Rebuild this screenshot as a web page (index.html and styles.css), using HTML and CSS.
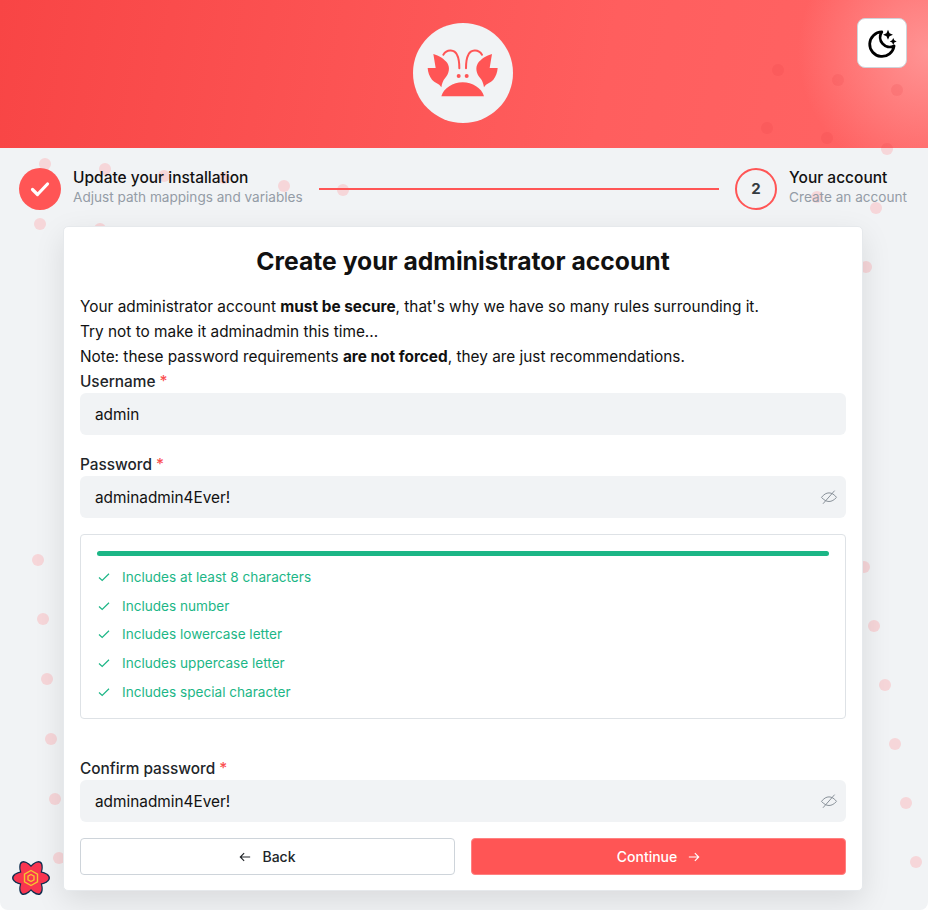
FILE: index.html
```html
<!DOCTYPE html>
<html lang="en">
  <head>
    <meta charset="UTF-8" />
    <meta name="viewport" content="width=device-width, initial-scale=1.0" />
    <title>Create your administrator account</title>
    <link rel="stylesheet" href="styles.css">
  </head>
  <body>
    <!-- Floating dots behind the page -->
    <svg class="dots" viewBox="0 0 928 910">
      <circle cx="45" cy="164" r="6" /><circle cx="105" cy="169" r="6" /><circle cx="164" cy="176" r="6" />
      <circle cx="224" cy="178" r="6" /><circle cx="284" cy="186" r="6" /><circle cx="343" cy="190" r="6" />
      <circle cx="40" cy="224" r="6" /><circle cx="100" cy="229" r="6" />
      <circle cx="38" cy="560" r="6" /><circle cx="43" cy="619" r="6" /><circle cx="47" cy="679" r="6" />
      <circle cx="51" cy="739" r="6" /><circle cx="55" cy="799" r="6" /><circle cx="59" cy="858" r="6" />
      <circle cx="887" cy="149" r="6" /><circle cx="817" cy="197" r="6" /><circle cx="876" cy="208" r="6" />
      <circle cx="866" cy="267" r="6" /><circle cx="864" cy="567" r="6" /><circle cx="874" cy="626" r="6" />
      <circle cx="885" cy="685" r="6" /><circle cx="895" cy="744" r="6" /><circle cx="906" cy="803" r="6" />
      <circle cx="916" cy="862" r="6" />
    </svg>

    <header class="top">
      <svg class="top-dots" viewBox="0 0 928 148">
        <circle cx="838" cy="80" r="6" /><circle cx="897" cy="90" r="6" /><circle cx="827" cy="138" r="6" />
        <circle cx="767" cy="128" r="6" /><circle cx="778" cy="70" r="6" /><circle cx="887" cy="149" r="6" />
      </svg>
      <div class="logo">
        <svg viewBox="100 70 300 300" width="100" height="100">
          <path class="crab" d="M161 163C178 168 194 178 203 190C212 205 208 222 196 236C190 243 187 252 185 263C178 250 165 250 157 240C149 230 145 218 144 205L168 205Z" />
          <path class="crab" d="M337 163C320 168 304 178 295 190C286 205 290 222 302 236C308 243 311 252 313 263C320 250 333 250 341 240C349 230 353 218 354 205L330 205Z" />
          <path class="crab-line" d="M239 206C239 190 238 176 232 165C225 151 203 146 191 165" />
          <path class="crab-line" d="M259 206C259 190 260 176 266 165C273 151 295 146 307 165" />
          <circle class="crab" cx="237" cy="229" r="6" />
          <circle class="crab" cx="261" cy="229" r="6" />
          <path class="crab" d="M185 290C192 265 220 248 249 248C278 248 306 265 313 290Z" />
        </svg>
      </div>
      <button class="theme-btn" aria-label="Toggle theme">
        <svg viewBox="0 0 24 24" width="33" height="33">
          <path class="moon" d="M11.5 3.6a7 7 0 0 0 8.9 10.2A8.9 8.9 0 1 1 11.5 3.6Z" />
          <path class="spark" d="M16 2l1.100 2.500 2.500 1.100-2.500 1.100-1.100 2.500-1.100-2.500-2.500-1.100 2.500-1.100Z" />
          <path class="spark" d="M19.800 8l.8 1.700 1.700.8-1.700.8-.8 1.700-.8-1.700-1.700-.8 1.700-.8Z" />
        </svg>
      </button>
    </header>

    <div class="stepper">
      <div class="step">
        <span class="step-icon done">
          <svg viewBox="0 0 24 24" width="24" height="24"><path d="M4.5 12.5l5 5 10-10.5" /></svg>
        </span>
        <div class="step-text">
          <div class="step-title">Update your installation</div>
          <div class="step-desc">Adjust path mappings and variables</div>
        </div>
      </div>
      <div class="step-line"></div>
      <div class="step">
        <span class="step-icon current">2</span>
        <div class="step-text">
          <div class="step-title">Your account</div>
          <div class="step-desc">Create an account</div>
        </div>
      </div>
    </div>

    <main class="card">
      <h1>Create your administrator account</h1>
      <p>Your administrator account <b>must be secure</b>, that's why we have so many rules surrounding it.</p>
      <p>Try not to make it adminadmin this time...</p>
      <p>Note: these password requirements <b>are not forced</b>, they are just recommendations.</p>

      <label class="field-label">Username <span class="req">*</span></label>
      <div class="input">admin</div>

      <label class="field-label second">Password <span class="req">*</span></label>
      <div class="input">
        adminadmin4Ever!
        <svg class="eye" viewBox="0 0 24 24" width="18" height="18">
          <path d="M2 12.5C5 8.5 8.5 6.5 12 6.5s7 2 10 6c-3 3.5-6.500 5.500-10 5.500S5 16 2 12.500Z" />
          <path d="M19.500 3.500L4 21" />
        </svg>
      </div>

      <div class="strength">
        <div class="bar"></div>
        <ul class="rules">
          <li><svg viewBox="0 0 14 14" width="14" height="14"><path d="M2 7.500l3.200 3L12 3.800" /></svg>Includes at least 8 characters</li>
          <li><svg viewBox="0 0 14 14" width="14" height="14"><path d="M2 7.500l3.200 3L12 3.800" /></svg>Includes number</li>
          <li><svg viewBox="0 0 14 14" width="14" height="14"><path d="M2 7.500l3.200 3L12 3.800" /></svg>Includes lowercase letter</li>
          <li><svg viewBox="0 0 14 14" width="14" height="14"><path d="M2 7.500l3.200 3L12 3.800" /></svg>Includes uppercase letter</li>
          <li><svg viewBox="0 0 14 14" width="14" height="14"><path d="M2 7.500l3.200 3L12 3.800" /></svg>Includes special character</li>
        </ul>
      </div>

      <label class="field-label third">Confirm password <span class="req">*</span></label>
      <div class="input">
        adminadmin4Ever!
        <svg class="eye" viewBox="0 0 24 24" width="18" height="18">
          <path d="M2 12.5C5 8.5 8.5 6.5 12 6.5s7 2 10 6c-3 3.5-6.500 5.500-10 5.500S5 16 2 12.500Z" />
          <path d="M19.500 3.500L4 21" />
        </svg>
      </div>

      <div class="actions">
        <button class="btn btn-back">
          <svg viewBox="0 0 14 14" width="12" height="12"><path d="M13 7H1.500M6 2.500L1.500 7 6 11.500" /></svg>
          Back
        </button>
        <button class="btn btn-next">
          Continue
          <svg viewBox="0 0 14 14" width="12" height="12"><path d="M1 7h11.500M8 2.500L12.500 7 8 11.500" /></svg>
        </button>
      </div>
    </main>

    <svg class="atom" viewBox="0 0 40 36">
      <g transform="translate(20 18)">
        <ellipse rx="19" ry="8" transform="rotate(0)" />
        <ellipse rx="19" ry="8" transform="rotate(60)" />
        <ellipse rx="19" ry="8" transform="rotate(120)" />
        <ellipse class="atom-fill" rx="17.500" ry="6.800" />
        <ellipse class="atom-fill" rx="17.500" ry="6.800" transform="rotate(60)" />
        <ellipse class="atom-fill" rx="17.500" ry="6.800" transform="rotate(120)" />
        <path class="atom-hex" d="M0-7.500L6.500-3.750V3.750L0 7.500-6.500 3.750V-3.750Z" />
        <path class="atom-hex" d="M0-3.500L3-1.750V1.750L0 3.500-3 1.750V-1.750Z" />
      </g>
    </svg>
  </body>
</html>
```

FILE: styles.css
```css
* {
  box-sizing: border-box;
}

html {
  background: #fff;
}

body {
  position: relative;
  width: 928px;
  height: 910px;
  margin: 0;
  overflow: hidden;
  font-family: Inter, "Liberation Sans", sans-serif;
  font-size: 15.36px;
  color: #111;
  background: #f1f3f5;
  border-radius: 0 0 8px 8px;
}

.dots {
  position: absolute;
  top: 0;
  left: 0;
  width: 928px;
  height: 910px;
  fill: #f6d6d9;
}

/* Header */
.top {
  position: relative;
  height: 148px;
  display: flex;
  justify-content: center;
  align-items: center;
  overflow: hidden;
  background:
    radial-gradient(circle at 100% 35%, rgba(255, 160, 160, 0.8), rgba(255, 110, 110, 0) 130px),
    linear-gradient(100deg, #f84545 0%, #ff5e5e 65%, #ff6464 100%);
}

.top-dots {
  position: absolute;
  top: 0;
  left: 0;
  width: 928px;
  height: 148px;
  fill: rgba(225, 60, 65, 0.14);
}

.logo {
  position: relative;
  width: 100px;
  height: 100px;
  margin: -2px 2px 0 0;
  border-radius: 50%;
  background: #f1f3f5;
}

.crab {
  fill: #ff5555;
}

.crab-line {
  fill: none;
  stroke: #ff5555;
  stroke-width: 6;
  stroke-linecap: round;
}

.theme-btn {
  position: absolute;
  top: 18px;
  right: 21px;
  width: 50px;
  height: 50px;
  padding: 0;
  display: flex;
  align-items: center;
  justify-content: center;
  background: #fff;
  border: 1px solid #ced4da;
  border-radius: 8px;
}

.moon {
  fill: none;
  stroke: #000;
  stroke-width: 2;
  stroke-linejoin: round;
}

.spark {
  fill: #000;
}

/* Stepper */
.stepper {
  position: relative;
  display: flex;
  align-items: center;
  height: 78px;
  padding: 3px 21px 0 19px;
}

.step {
  display: flex;
  align-items: center;
  gap: 12px;
}

.step-icon {
  width: 42px;
  height: 42px;
  border-radius: 50%;
  display: flex;
  align-items: center;
  justify-content: center;
  font-size: 15px;
  font-weight: 700;
  color: #343a40;
}

.step-icon.done {
  background: #ff5555;
}

.step-icon.done path {
  fill: none;
  stroke: #fff;
  stroke-width: 3.200;
  stroke-linecap: round;
  stroke-linejoin: round;
}

.step-icon.current {
  border: 2px solid #ff5555;
}

.step-text {
  margin-top: -2px;
}

.step-title {
  font-size: 15.5px;
  font-weight: 500;
  line-height: 20px;
}

.step-desc {
  font-size: 13.6px;
  line-height: 19px;
  color: #949ca6;
}

.step-line {
  flex: 1;
  height: 2px;
  margin: 0 16px;
  background: #ff5555;
}

/* Card */
.card {
  position: relative;
  width: 800px;
  height: 665px;
  margin-left: 63px;
  padding: 16px;
  background: #fff;
  border: 1px solid #e6e9ec;
  border-radius: 5px;
  box-shadow: 0 10px 30px rgba(0, 0, 0, 0.1);
}

h1 {
  margin: 0 0 15px;
  font-size: 24.7px;
  font-weight: 700;
  line-height: 36px;
  text-align: center;
}

p {
  margin: 0;
  line-height: 25px;
}

.field-label {
  display: block;
  margin-top: 2px;
  font-weight: 500;
  line-height: 22px;
  color: #212529;
}

.field-label.second {
  margin-top: 19px;
}

.field-label.third {
  margin-top: 39px;
}

.req {
  color: #fa5252;
}

.input {
  position: relative;
  height: 42px;
  padding: 1px 15px 0;
  display: flex;
  align-items: center;
  background: #f1f3f5;
  border-radius: 6px;
}

.eye {
  position: absolute;
  top: 12px;
  right: 8px;
  fill: none;
  stroke: #868e96;
  stroke-width: 1.300;
}

/* Password strength box */
.strength {
  height: 185px;
  margin-top: 16px;
  padding: 16px;
  border: 1px solid #dee2e6;
  border-radius: 4px;
}

.bar {
  height: 5px;
  background: #1cb686;
  border-radius: 3px;
}

.rules {
  margin: 7px 0 0;
  padding: 0;
  list-style: none;
}

.rules li {
  display: flex;
  align-items: center;
  gap: 11px;
  height: 28.600px;
  font-size: 13.6px;
  color: #1cb686;
}

.rules svg {
  fill: none;
  stroke: #1cb686;
  stroke-width: 1.200;
}

.actions {
  display: flex;
  gap: 16px;
  margin-top: 16px;
}

.btn {
  flex: 1;
  height: 37px;
  padding: 0;
  display: flex;
  align-items: center;
  justify-content: center;
  gap: 11px;
  font-family: inherit;
  font-size: 14px;
  font-weight: 500;
  border-radius: 4px;
}

.btn svg {
  fill: none;
  stroke-width: 1.300;
}

.btn-back {
  color: #212529;
  background: #fff;
  border: 1px solid #ced4da;
}

.btn-back svg {
  stroke: #212529;
}

.btn-next {
  color: #fff;
  background: #ff5555;
  border: 1px solid #ff8080;
}

.btn-next svg {
  stroke: #fff;
}

/* Dev tools badge, sits over the corner */
.atom {
  position: absolute;
  left: 11px;
  bottom: 14px;
  width: 40px;
  height: 36px;
  fill: #0f2f4f;
}

.atom-fill {
  fill: #f9354f;
}

.atom-hex {
  fill: none;
  stroke: #f4c430;
  stroke-width: 1.400;
}
```
